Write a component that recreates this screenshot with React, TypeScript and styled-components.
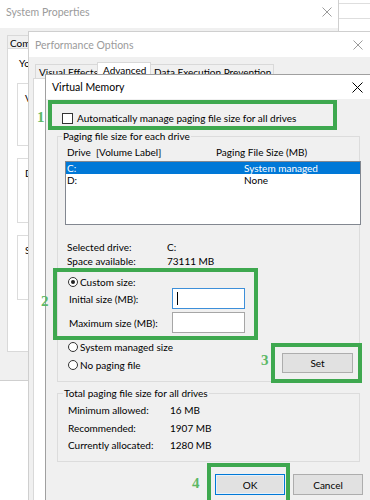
import React from "react";
import styled, { createGlobalStyle } from "styled-components";

const GREEN = "#3ea84f";
const FONT = `Lato, "Noto Sans", "DejaVu Sans", sans-serif`;

const GlobalStyle = createGlobalStyle`
  html, body { margin: 0; padding: 0; background: #ffffff; }
  body { font-family: ${FONT}; font-size: 10px; color: #000; }
  * { box-sizing: border-box; }
`;

const Desktop = styled.div`
  position: relative;
  width: 370px;
  height: 500px;
  overflow: hidden;
  background: #ffffff;
`;

const BackWindow = styled.div`
  position: absolute;
  left: 339px;
  top: 3px;
  width: 40px;
  height: 16px;
  background: #fff;
  border-top: 1px solid #dedede;
  border-bottom: 1px solid #dedede;
`;

const Window = styled.section<{ $x: number; $y: number; $w: number; $h: number; $active?: boolean }>`
  position: absolute;
  left: ${(p) => p.$x}px;
  top: ${(p) => p.$y}px;
  width: ${(p) => p.$w}px;
  height: ${(p) => p.$h}px;
  display: flex;
  flex-direction: column;
  background: #f0f0f0;
  border: 1px solid ${(p) => (p.$active ? "#a0a0a0" : "#cfcfcf")};
  overflow: hidden;
`;

const TitleBar = styled.header<{ $h: number; $pr: number; $active?: boolean }>`
  flex: none;
  height: ${(p) => p.$h}px;
  display: flex;
  align-items: center;
  justify-content: space-between;
  padding: 0 ${(p) => p.$pr}px 0 6px;
  background: #fff;
  color: ${(p) => (p.$active ? "#000" : "#9b9b9b")};
  font-size: 10.5px;
  white-space: nowrap;
`;

const CloseGlyph = styled.svg`
  flex: none;
  display: block;
`;

function CloseIcon({ size }: { size: number }) {
  return (
    <CloseGlyph width={size} height={size} viewBox={`0 0 ${size} ${size}`}>
      <path
        d={`M0.5 0.5 L${size - 0.5} ${size - 0.5} M${size - 0.5} 0.5 L0.5 ${size - 0.5}`}
        stroke="currentColor"
        strokeWidth="1"
        fill="none"
      />
    </CloseGlyph>
  );
}

/* ---------- generic dialog parts ---------- */

const DialogBody = styled.div<{ $pt: number; $pl: number; $clip?: number }>`
  flex: 1;
  display: flex;
  flex-direction: column;
  align-items: flex-start;
  padding: ${(p) => p.$pt}px 0 0 ${(p) => p.$pl}px;
  min-height: 0;
  ${(p) => (p.$clip ? `max-width: ${p.$clip}px; overflow: hidden;` : "")}
`;

const TabStrip = styled.div<{ $h: number; $ml: number }>`
  flex: none;
  display: flex;
  align-items: flex-end;
  height: ${(p) => p.$h}px;
  margin-left: ${(p) => p.$ml}px;
`;

const Tab = styled.div<{ $selected?: boolean; $w: number; $pl: number; $strip: number }>`
  flex: none;
  width: ${(p) => p.$w}px;
  height: ${(p) => (p.$selected ? p.$strip : p.$strip - 2)}px;
  padding: 1px 0 0 ${(p) => p.$pl}px;
  line-height: 12px;
  background: ${(p) => (p.$selected ? "#fff" : "#f0f0f0")};
  border: 1px solid #d9d9d9;
  border-bottom: none;
  margin-right: -1px;
  white-space: nowrap;
`;

const TabPage = styled.div<{ $h?: number; $w?: number }>`
  flex: ${(p) => (p.$h ? "none" : "1")};
  align-self: stretch;
  height: ${(p) => (p.$h ? `${p.$h}px` : "auto")};
  width: ${(p) => (p.$w ? `${p.$w}px` : "auto")};
  background: #fff;
  border: 1px solid #d9d9d9;
  margin-right: -20px;
`;

/* ---------- System Properties (behind) ---------- */

const SysPage = styled.div`
  padding: 8px 0 0 11px;
  white-space: nowrap;
`;

const Line = styled.div`
  height: 12px;
  line-height: 12px;
`;

const SideGroup = styled.fieldset<{ $h: number; $mt: number }>`
  margin: ${(p) => p.$mt}px 0 0 -2px;
  padding: 0 0 0 7px;
  width: 300px;
  min-width: 0;
  height: ${(p) => p.$h}px;
  border: 1px solid #dcdcdc;
`;

const SideLegend = styled.legend`
  margin-left: 6px;
  padding: 0 1px;
  line-height: 12px;
`;

const SideText = styled.div`
  margin-top: 3px;
  line-height: 12px;
`;

/* ---------- Virtual Memory ---------- */

const CheckRow = styled.div`
  flex: none;
  display: flex;
  align-items: center;
  gap: 4px;
  height: 14px;
  margin: 12px 0 0 16px;
  white-space: nowrap;
`;

const CheckBox = styled.span`
  flex: none;
  width: 11px;
  height: 11px;
  border: 1px solid #333;
  background: #fff;
`;

const Group = styled.fieldset<{ $ml: number; $mt: number; $pb: number }>`
  flex: none;
  display: block;
  margin: ${(p) => p.$mt}px 0 0 ${(p) => p.$ml}px;
  padding: 0 0 ${(p) => p.$pb}px 0;
  width: 303px;
  min-width: 0;
  border: 1px solid #dcdcdc;
`;

const Legend = styled.legend<{ $ml: number }>`
  margin-left: ${(p) => p.$ml}px;
  padding: 0 1px;
  line-height: 12px;
  white-space: nowrap;
`;

const Columns = styled.div<{ $ml: number; $mt?: number; $col: number; $h?: number }>`
  display: grid;
  grid-template-columns: ${(p) => p.$col}px auto;
  margin: ${(p) => p.$mt ?? 0}px 0 0 ${(p) => p.$ml}px;
  height: ${(p) => p.$h ?? 14}px;
  line-height: ${(p) => p.$h ?? 14}px;
  white-space: pre;
`;

const ListBox = styled.div`
  margin: 3px 0 0 7px;
  width: 296px;
  height: 64px;
  border: 1px solid #828790;
  background: #fff;
`;

const ListRow = styled.div<{ $selected?: boolean }>`
  display: grid;
  grid-template-columns: 177px auto;
  height: 12px;
  line-height: 12px;
  padding-left: 1px;
  background: ${(p) => (p.$selected ? "#0078d7" : "transparent")};
  color: ${(p) => (p.$selected ? "#fff" : "#000")};
  white-space: nowrap;
`;

const RadioRow = styled.div<{ $ml?: number; $mt?: number }>`
  display: flex;
  align-items: center;
  gap: 2px;
  height: 12px;
  margin: ${(p) => p.$mt ?? 0}px 0 0 ${(p) => p.$ml ?? 0}px;
  white-space: nowrap;
`;

const Radio = styled.span<{ $checked?: boolean }>`
  flex: none;
  width: 10px;
  height: 10px;
  border: 1px solid #333;
  border-radius: 50%;
  background: #fff;
  display: flex;
  align-items: center;
  justify-content: center;
  &::after {
    content: "";
    display: ${(p) => (p.$checked ? "block" : "none")};
    width: 4px;
    height: 4px;
    border-radius: 50%;
    background: #222;
  }
`;

const FieldRow = styled.div<{ $mt: number }>`
  display: grid;
  grid-template-columns: 103px 73px;
  align-items: center;
  margin: ${(p) => p.$mt}px 0 0 11px;
  height: 21px;
  white-space: nowrap;
`;

const TextBox = styled.div<{ $focused?: boolean }>`
  height: 21px;
  display: flex;
  align-items: center;
  padding-left: 4px;
  background: #fff;
  border: 1px solid ${(p) => (p.$focused ? "#3d8fd9" : "#a6a6a6")};
`;

const Caret = styled.span`
  width: 1px;
  height: 13px;
  background: #000;
`;

const BottomRow = styled.div`
  display: flex;
  justify-content: space-between;
  align-items: flex-end;
  margin: 8px 6px 0 10px;
`;

const RadioStack = styled.div`
  display: flex;
  flex-direction: column;
  gap: 6px;
  padding-bottom: 2px;
`;

const Button = styled.button<{ $default?: boolean; $w: number }>`
  flex: none;
  width: ${(p) => p.$w}px;
  height: ${(p) => (p.$default !== undefined ? 21 : 20)}px;
  padding: 0;
  font-family: ${FONT};
  font-size: 10px;
  color: #000;
  background: #e1e1e1;
  border: 1px solid ${(p) => (p.$default ? "#0078d7" : "#adadad")};
  box-shadow: ${(p) => (p.$default ? "inset 0 0 0 1px #e5f1fb" : "none")};
`;

const TotalsList = styled.div`
  display: flex;
  flex-direction: column;
  gap: 3.5px;
  margin-top: 4px;
`;

const ButtonRow = styled.div`
  flex: none;
  align-self: stretch;
  display: flex;
  justify-content: flex-end;
  gap: 8px;
  margin-top: 12px;
  padding-right: 7px;
`;

/* ---------- annotations ---------- */

const Callout = styled.div<{ $x: number; $y: number; $w: number; $h: number }>`
  position: absolute;
  left: ${(p) => p.$x}px;
  top: ${(p) => p.$y}px;
  width: ${(p) => p.$w}px;
  height: ${(p) => p.$h}px;
  border: 4px solid ${GREEN};
  pointer-events: none;
`;

const StepNumber = styled.span<{ $x: number; $y: number }>`
  position: absolute;
  left: ${(p) => p.$x}px;
  top: ${(p) => p.$y}px;
  font-family: "Liberation Serif", "DejaVu Serif", serif;
  font-weight: bold;
  font-size: 15px;
  line-height: 15px;
  color: #5cb865;
`;

export default function App() {
  return (
    <>
      <GlobalStyle />
      <Desktop>
        <BackWindow />

        {/* System Properties: only its left strip shows past Performance Options */}
        <Window $x={-1} $y={-5} $w={340} $h={386}>
          <TitleBar $h={32} $pr={6}>
            <span>System Properties</span>
            <CloseIcon size={10} />
          </TitleBar>
          <DialogBody $pt={5} $pl={7} $clip={29}>
            <TabStrip $h={15} $ml={0}>
              <Tab $strip={15} $w={30} $pl={2}>Com</Tab>
            </TabStrip>
            <TabPage $h={304} $w={40}>
              <SysPage>
                <Line>You</Line>
                <SideGroup $mt={8} $h={69}>
                  <SideLegend>Per</SideLegend>
                  <SideText>Visual</SideText>
                </SideGroup>
                <SideGroup $mt={6} $h={71}>
                  <SideLegend>User</SideLegend>
                  <SideText>Desk</SideText>
                </SideGroup>
                <SideGroup $mt={6} $h={71}>
                  <SideLegend>Start</SideLegend>
                  <SideText>System</SideText>
                </SideGroup>
              </SysPage>
            </TabPage>
          </DialogBody>
        </Window>

        {/* Performance Options */}
        <Window $x={28} $y={31} $w={345} $h={475}>
          <TitleBar $h={25} $pr={9}>
            <span>Performance Options</span>
            <CloseIcon size={10} />
          </TitleBar>
          <DialogBody $pt={5} $pl={4}>
            <TabStrip $h={16} $ml={2}>
              <Tab $strip={16} $w={63} $pl={3}>Visual Effects</Tab>
              <Tab $strip={16} $w={54} $pl={5} $selected>Advanced</Tab>
              <Tab $strip={16} $w={124} $pl={3}>Data Execution Prevention</Tab>
            </TabStrip>
            <TabPage />
          </DialogBody>
        </Window>

        {/* Virtual Memory */}
        <Window $x={45} $y={74} $w={326} $h={430} $active>
          <TitleBar $h={24} $pr={7} $active>
            <span>Virtual Memory</span>
            <CloseIcon size={11} />
          </TitleBar>
          <DialogBody $pt={0} $pl={0}>
            <CheckRow>
              <CheckBox />
              <span>Automatically manage paging file size for all drives</span>
            </CheckRow>

            <Group $ml={11} $mt={5} $pb={8}>
              <Legend $ml={4}>Paging file size for each drive</Legend>
              <Columns $ml={9} $mt={4} $col={149} $h={12}>
                <span>Drive  [Volume Label]</span>
                <span>Paging File Size (MB)</span>
              </Columns>
              <ListBox>
                <ListRow $selected>
                  <span>C:</span>
                  <span>System managed</span>
                </ListRow>
                <ListRow>
                  <span>D:</span>
                  <span>None</span>
                </ListRow>
              </ListBox>
              <Columns $ml={9} $mt={15} $col={100}>
                <span>Selected drive:</span>
                <span>C:</span>
              </Columns>
              <Columns $ml={9} $col={100}>
                <span>Space available:</span>
                <span>73111 MB</span>
              </Columns>
              <RadioRow $ml={10} $mt={8}>
                <Radio $checked />
                <span>Custom size:</span>
              </RadioRow>
              <FieldRow $mt={0}>
                <span>Initial size (MB):</span>
                <TextBox $focused>
                  <Caret />
                </TextBox>
              </FieldRow>
              <FieldRow $mt={3}>
                <span>Maximum size (MB):</span>
                <TextBox />
              </FieldRow>
              <BottomRow>
                <RadioStack>
                  <RadioRow>
                    <Radio />
                    <span>System managed size</span>
                  </RadioRow>
                  <RadioRow>
                    <Radio />
                    <span>No paging file</span>
                  </RadioRow>
                </RadioStack>
                <Button $w={71}>Set</Button>
              </BottomRow>
            </Group>

            <Group $ml={11} $mt={5} $pb={9}>
              <Legend $ml={5}>Total paging file size for all drives</Legend>
              <TotalsList>
                <Columns $ml={10} $col={102}>
                  <span>Minimum allowed:</span>
                  <span>16 MB</span>
                </Columns>
                <Columns $ml={10} $col={102}>
                  <span>Recommended:</span>
                  <span>1907 MB</span>
                </Columns>
                <Columns $ml={10} $col={102}>
                  <span>Currently allocated:</span>
                  <span>1280 MB</span>
                </Columns>
              </TotalsList>
            </Group>

            <ButtonRow>
              <Button $w={70} $default>OK</Button>
              <Button $w={70} $default={false}>Cancel</Button>
            </ButtonRow>
          </DialogBody>
        </Window>

        {/* annotations */}
        <Callout $x={48} $y={100} $w={289} $h={30} />
        <StepNumber $x={37} $y={110}>1</StepNumber>
        <Callout $x={53} $y={268} $w={205} $h={72} />
        <StepNumber $x={41} $y={294}>2</StepNumber>
        <Callout $x={271} $y={343} $w={91} $h={40} />
        <StepNumber $x={261} $y={353}>3</StepNumber>
        <Callout $x={207} $y={463} $w={83} $h={42} />
        <StepNumber $x={192} $y={476}>4</StepNumber>
      </Desktop>
    </>
  );
}
